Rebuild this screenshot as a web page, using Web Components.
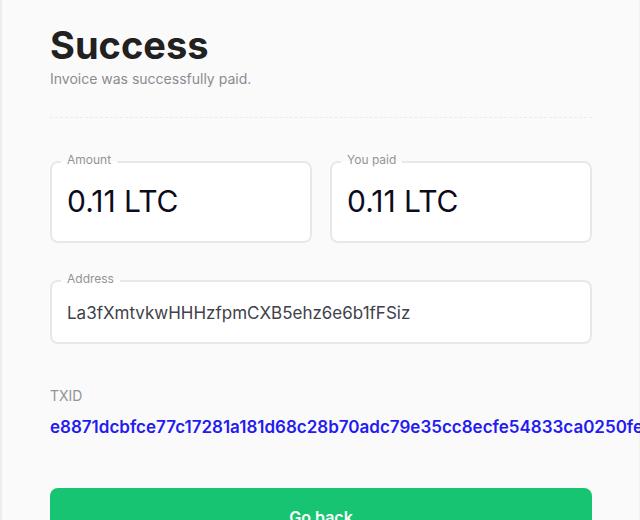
<!DOCTYPE html>
<html lang="en">
<head>
<meta charset="utf-8">
<title>Success</title>
<style>
  html { overflow: hidden; background: #fafafa; }
  body { margin: 0; font-family: Inter, "Liberation Sans", sans-serif; color: #212121; }
</style>
</head>
<body>
<invoice-receipt></invoice-receipt>

<template id="receipt-template">
  <style>
    :host { display: block; box-sizing: border-box; min-height: 100vh; background: #fafafa; border-left: 2px solid #ededed; border-right: 1px solid #f2f2f2; padding: 23px 47px 32px 48px; }
    .row { display: grid; grid-template-columns: 1fr 1fr; gap: 18px; margin-top: 33px; }
    .wide { margin-top: 27px; }
    transaction-link { margin-top: 42px; }
    action-button { margin-top: 49px; }
  </style>
  <receipt-heading>
    <span slot="title">Success</span>
    <span slot="note">Invoice was successfully paid.</span>
  </receipt-heading>
  <div class="row">
    <outlined-field size="large" label="Amount" value="0.11 LTC"></outlined-field>
    <outlined-field size="large" label="You paid" value="0.11 LTC"></outlined-field>
  </div>
  <outlined-field class="wide" label="Address" value="La3fXmtvkwHHHzfpmCXB5ehz6e6b1fFSiz"></outlined-field>
  <transaction-link>
    <span slot="label">TXID</span>
    e8871dcbfce77c17281a181d68c28b70adc79e35cc8ecfe54833ca0250fe
  </transaction-link>
  <action-button>Go back</action-button>
</template>

<template id="heading-template">
  <style>
    :host { display: block; padding-bottom: 27px; border-bottom: 1px dashed #ebebeb; }
    h1 { margin: 0 0 1px; font-size: 38px; line-height: 44px; font-weight: 700; color: #212121; }
    p { margin: 0; font-size: 14px; line-height: 22px; color: #8b8b92; }
  </style>
  <h1><slot name="title"></slot></h1>
  <p><slot name="note"></slot></p>
</template>

<template id="field-template">
  <style>
    :host { display: block; min-width: 0; }
    fieldset { margin: 0; min-width: 0; border: 2px solid #e8e8e8; border-radius: 8px; padding: 0 15px; background: #ffffff; }
    legend { margin-left: -6px; padding: 0 6px 3px; font-size: 12px; line-height: 18px; color: #949494; }
    label { display: block; }
    input { display: block; box-sizing: border-box; width: 100%; border: 0; padding: 0; margin: 0; outline: 0; background: transparent; font-family: inherit; font-size: 17px; line-height: 24px; height: 51px; padding-bottom: 8px; color: #41414b; }
    :host([size="large"]) input { font-size: 30px; line-height: 40px; height: 69px; padding-bottom: 12px; color: #0c0c1c; }
  </style>
  <fieldset>
    <legend><label for="value"></label></legend>
    <input id="value" type="text" readonly>
  </fieldset>
</template>

<template id="transaction-template">
  <style>
    :host { display: block; }
    .label { font-size: 14px; line-height: 20px; color: #949494; }
    a { display: block; margin-top: 9px; font-size: 17px; line-height: 24px; font-weight: 600; white-space: nowrap; color: #241af2; text-decoration: none; }
  </style>
  <div class="label"><slot name="label"></slot></div>
  <a href="#transaction"><slot></slot></a>
</template>

<template id="button-template">
  <style>
    :host { display: block; }
    button { display: block; width: 100%; height: 58px; border: 0; border-radius: 8px; padding: 0; background: #16c472; color: #ffffff; font-family: inherit; font-size: 16px; line-height: 24px; font-weight: 600; cursor: pointer; }
  </style>
  <button type="button"><slot></slot></button>
</template>

<script>
  class TemplateElement extends HTMLElement {
    constructor() {
      super();
      const template = document.getElementById(this.constructor.template);
      this.attachShadow({ mode: "open" }).append(template.content.cloneNode(true));
    }
  }
  customElements.define("receipt-heading", class extends TemplateElement {
    static template = "heading-template";
  });
  customElements.define("outlined-field", class extends TemplateElement {
    static template = "field-template";
    connectedCallback() {
      this.shadowRoot.querySelector("label").textContent = this.getAttribute("label");
      this.shadowRoot.querySelector("input").value = this.getAttribute("value");
    }
  });
  customElements.define("transaction-link", class extends TemplateElement {
    static template = "transaction-template";
  });
  customElements.define("action-button", class extends TemplateElement {
    static template = "button-template";
  });
  customElements.define("invoice-receipt", class extends TemplateElement {
    static template = "receipt-template";
  });
</script>
</body>
</html>
